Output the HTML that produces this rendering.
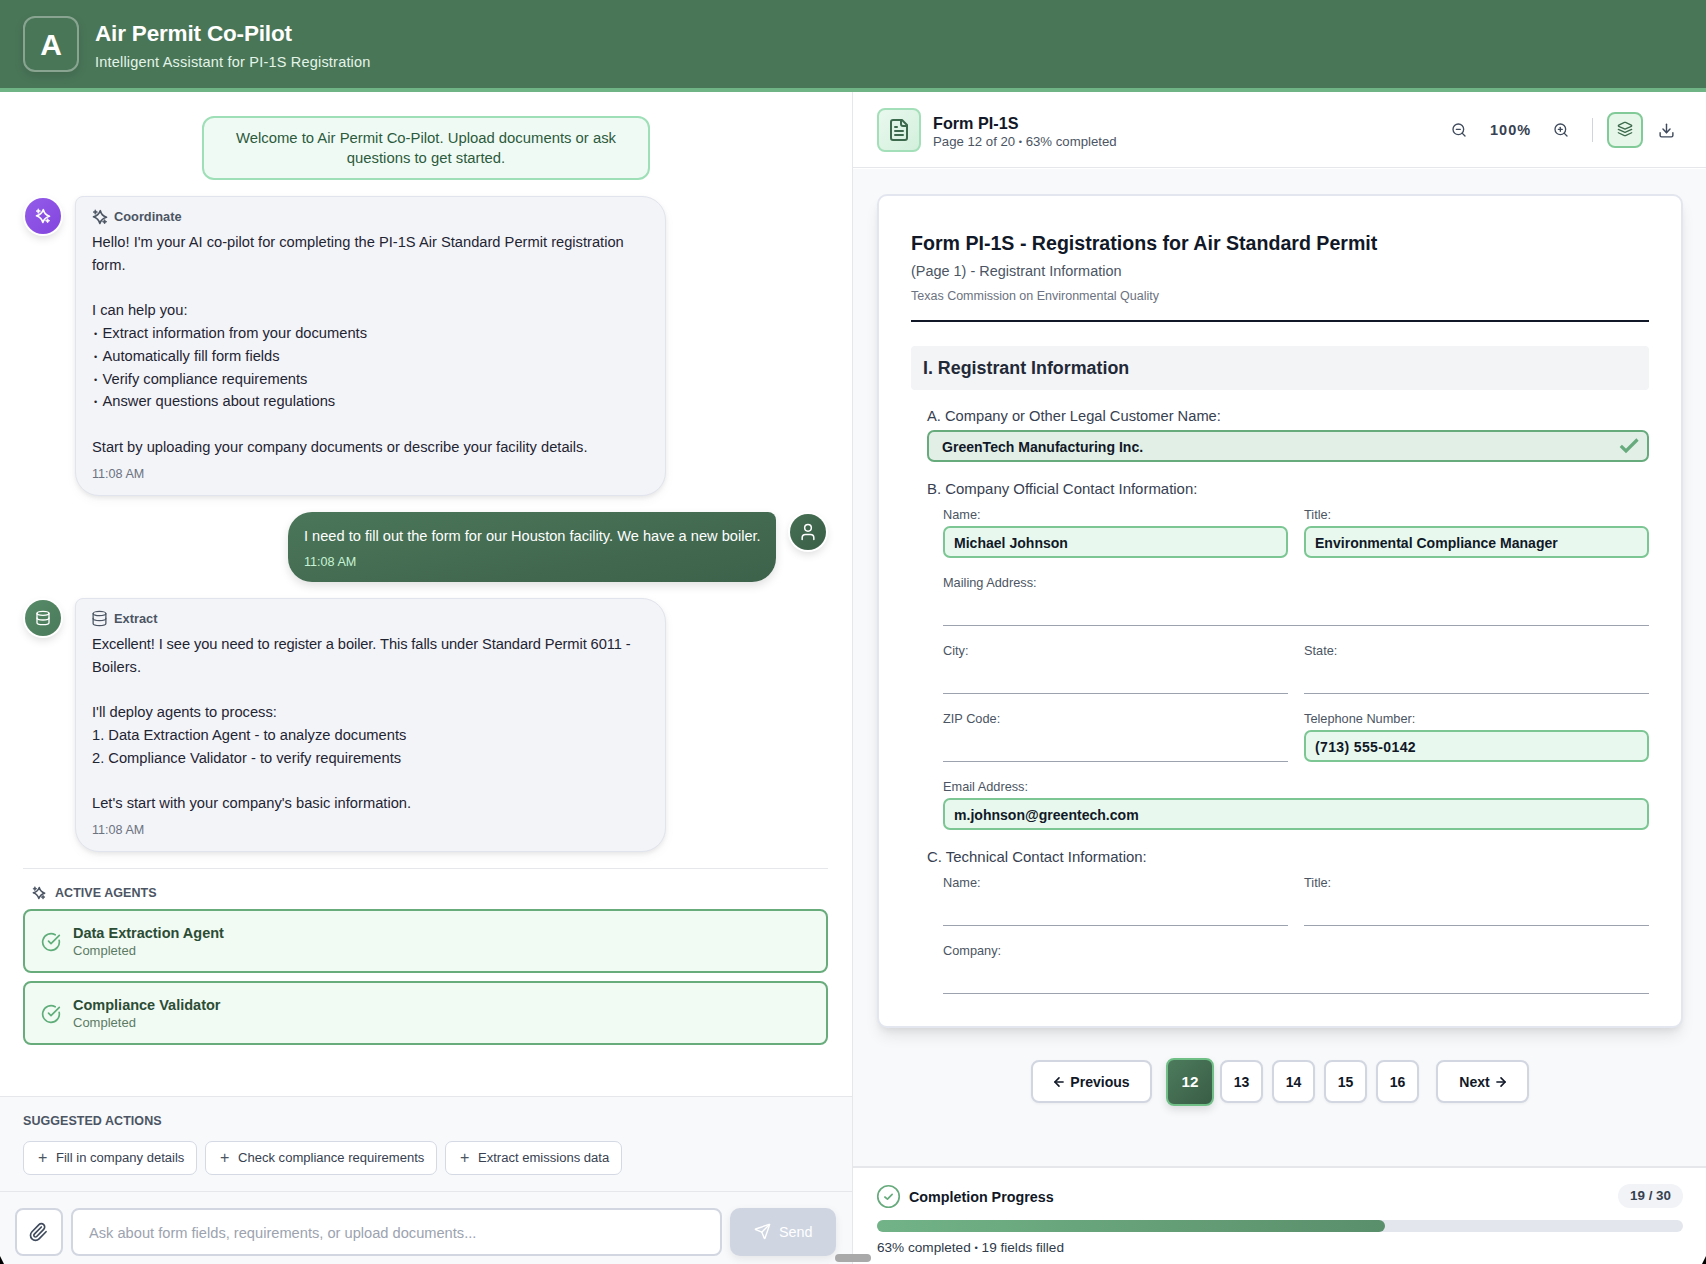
<!DOCTYPE html>
<html><head><meta charset="utf-8">
<style>
*{box-sizing:border-box;margin:0;padding:0}
html,body{width:1706px;height:1264px;overflow:hidden;background:#fff;font-family:"Liberation Sans",sans-serif;color:#111827}
.abs{position:absolute}
#hdr{left:0;top:0;width:1706px;height:88px;background:#4a7658}
#hdrbar{left:0;top:88px;width:1706px;height:4px;background:#6fb485}
#logo{left:23px;top:16px;width:56px;height:56px;border:2px solid rgba(255,255,255,0.35);border-radius:12px;box-shadow:0 4px 10px rgba(0,0,0,0.12);color:#fff;font-weight:bold;font-size:30px;text-align:center;line-height:53px}
#title{left:95px;top:20px;color:#fff;font-weight:bold;font-size:22.5px;line-height:28px;letter-spacing:-0.17px}
#subtitle{left:95px;top:53px;color:#e3f5e8;font-size:14.5px;line-height:18px;letter-spacing:0.2px}
#left{left:0;top:92px;width:852px;height:1172px;background:#fff}
#divider{left:852px;top:92px;width:1px;height:1172px;background:#e5e7eb}
#welcome{left:202px;top:116px;width:448px;height:64px;border:2px solid #9fdfb7;border-radius:12px;background:#f0faf4;color:#2c5a3c;font-size:14.85px;line-height:20px;text-align:center;padding-top:10px}
.av{width:36px;height:36px;border-radius:50%;box-shadow:0 0 0 2px #fff,0 4px 10px rgba(0,0,0,0.15)}
.bub{background:#f3f4f8;border:1px solid #e1e4ec;border-radius:8px 24px 24px 24px;box-shadow:0 2px 4px rgba(0,0,0,0.07),0 4px 12px rgba(0,0,0,0.04)}
.bh{font-size:12.8px;font-weight:bold;color:#4b5563;line-height:16px}
.bt{font-size:14.7px;line-height:22.75px;color:#1f2433;white-space:pre}
.dot{font-size:9px;display:inline-block;width:10.5px;line-height:0;position:relative;top:-1px;padding-left:2px}
.tm{font-size:12.6px;color:#6b7280;line-height:14px}

.lbl{font-size:12.5px;font-weight:bold;color:#4b5563;letter-spacing:0.05px;line-height:16px}
.agent{left:23px;width:805px;height:64px;border:2px solid #68ac7c;border-radius:8px;background:#f2faf4}
.an{left:48px;top:13px;font-size:14.5px;font-weight:bold;color:#2b4d34;line-height:18px}
.as{left:48px;top:32px;font-size:13px;color:#5b7a63;line-height:16px}
.sbtn{top:1141px;height:34px;border:1px solid #d4d9e3;border-radius:7px;background:#fff;font-size:13.05px;color:#374151;line-height:32px;padding-left:32px}
.pl{position:absolute;left:14px;top:0;font-size:16px;color:#4b5563}

.sec{left:927px;font-size:14.95px;color:#374151;line-height:17px}
.sm{font-size:12.75px;color:#4b5563;line-height:15px}
.fld{height:32px;border:2px solid #7cc694;border-radius:7px;background:#e8f8ee;font-size:14.05px;font-weight:bold;color:#111827;line-height:31px;padding-left:9px}
.f1{border-color:#67ab7d;background:#e2efe6;padding-left:13px}
.ul{height:1px;background:#9ca3af}
.pb{top:1060px;height:43px;border:2px solid #d1d6e0;border-radius:8px;background:#fff;color:#111827;font-size:14.05px;font-weight:bold;display:flex;align-items:center;justify-content:center;line-height:16px;padding-top:1px;box-shadow:0 1px 3px rgba(0,0,0,0.05)}
.dot2{font-size:0.7em;position:relative;top:-1px}
</style></head><body>
<div id="hdr" class="abs"></div>
<div id="hdrbar" class="abs"></div>
<div id="logo" class="abs">A</div>
<div id="title" class="abs">Air Permit Co-Pilot</div>
<div id="subtitle" class="abs">Intelligent Assistant for PI-1S Registration</div>

<div id="divider" class="abs"></div>

<div id="welcome" class="abs">Welcome to Air Permit Co-Pilot. Upload documents or ask<br>questions to get started.</div>

<!-- Coordinate message -->
<div class="abs av" style="left:25px;top:198px;background:linear-gradient(135deg,#935ce9,#8445df)"></div>
<svg class="abs" style="left:35px;top:208px" width="16" height="16" viewBox="-8 -8 16 16" fill="none" stroke="#fff" stroke-width="1.7" stroke-linejoin="round"><path d="M0.3 -6.3 Q1.5 -1.5 6.5 0.2 Q1.5 1.5 -0.2 6.4 Q-1.5 1.5 -6.5 -0.2 Q-1.5 -1.5 0.3 -6.3Z"/><path fill="#fff" stroke-width="0.6" d="M-4.7 -7.3 Q-4.3 -5.3 -2.4 -4.9 Q-4.3 -4.5 -4.7 -2.5 Q-5.1 -4.5 -7 -4.9 Q-5.1 -5.3 -4.7 -7.3Z"/><path fill="#fff" stroke-width="0.6" d="M4.6 2.4 Q5 4.3 6.9 4.7 Q5 5.1 4.6 7 Q4.2 5.1 2.3 4.7 Q4.2 4.3 4.6 2.4Z"/></svg>
<div class="abs bub" style="left:75px;top:196px;width:591px;height:300px"></div>
<svg class="abs" style="left:92px;top:209px" width="16" height="16" viewBox="-8 -8 16 16" fill="none" stroke="#4b5563" stroke-width="1.7" stroke-linejoin="round"><path d="M0.3 -6.3 Q1.5 -1.5 6.5 0.2 Q1.5 1.5 -0.2 6.4 Q-1.5 1.5 -6.5 -0.2 Q-1.5 -1.5 0.3 -6.3Z"/><path fill="#4b5563" stroke-width="0.6" d="M-4.7 -7.3 Q-4.3 -5.3 -2.4 -4.9 Q-4.3 -4.5 -4.7 -2.5 Q-5.1 -4.5 -7 -4.9 Q-5.1 -5.3 -4.7 -7.3Z"/><path fill="#4b5563" stroke-width="0.6" d="M4.6 2.4 Q5 4.3 6.9 4.7 Q5 5.1 4.6 7 Q4.2 5.1 2.3 4.7 Q4.2 4.3 4.6 2.4Z"/></svg>
<div class="abs bh" style="left:114px;top:209px">Coordinate</div>
<div class="abs bt" style="left:92px;top:231px">Hello! I'm your AI co-pilot for completing the PI-1S Air Standard Permit registration
form.

I can help you:
<span class="dot">•</span>Extract information from your documents
<span class="dot">•</span>Automatically fill form fields
<span class="dot">•</span>Verify compliance requirements
<span class="dot">•</span>Answer questions about regulations

Start by uploading your company documents or describe your facility details.</div>
<div class="abs tm" style="left:92px;top:467px">11:08 AM</div>

<!-- User message -->
<div class="abs" style="left:288px;top:512px;width:488px;height:70px;border-radius:24px 8px 24px 24px;background:linear-gradient(170deg,#4b7659,#3d624b);box-shadow:0 4px 10px rgba(0,0,0,0.12)"></div>
<div class="abs" style="left:304px;top:528px;color:#fff;font-size:14.62px;line-height:17px">I need to fill out the form for our Houston facility. We have a new boiler.</div>
<div class="abs" style="left:304px;top:555px;color:#c8f3d4;font-size:12.6px;line-height:14px">11:08 AM</div>
<div class="abs av" style="left:790px;top:514px;background:linear-gradient(135deg,#456f53,#3a5f48)"></div>
<svg class="abs" style="left:798px;top:522px" width="20" height="20" viewBox="0 0 24 24" fill="none" stroke="#fff" stroke-width="1.8" stroke-linecap="round" stroke-linejoin="round"><path d="M19 21v-2a4 4 0 0 0-4-4H9a4 4 0 0 0-4 4v2"/><circle cx="12" cy="7" r="4"/></svg>

<!-- Extract message -->
<div class="abs av" style="left:25px;top:600px;background:linear-gradient(135deg,#578b68,#4a7a5a)"></div>
<svg class="abs" style="left:35px;top:610px" width="16" height="16" viewBox="0 0 24 24" fill="none" stroke="#fff" stroke-width="2" stroke-linecap="round" stroke-linejoin="round"><ellipse cx="12" cy="5" rx="9" ry="3"/><path d="M3 5V19A9 3 0 0 0 21 19V5"/><path d="M3 12A9 3 0 0 0 21 12"/></svg>
<div class="abs bub" style="left:75px;top:598px;width:591px;height:254px"></div>
<svg class="abs" style="left:91px;top:610px" width="17" height="17" viewBox="0 0 24 24" fill="none" stroke="#4b5563" stroke-width="1.8" stroke-linecap="round" stroke-linejoin="round"><ellipse cx="12" cy="5" rx="9" ry="3"/><path d="M3 5V19A9 3 0 0 0 21 19V5"/><path d="M3 12A9 3 0 0 0 21 12"/></svg>
<div class="abs bh" style="left:114px;top:611px">Extract</div>
<div class="abs bt" style="left:92px;top:633px"><span style="letter-spacing:-0.1px">Excellent! I see you need to register a boiler. This falls under Standard Permit 6011 -</span>
Boilers.

I'll deploy agents to process:
1. Data Extraction Agent - to analyze documents
2. Compliance Validator - to verify requirements

Let's start with your company's basic information.</div>
<div class="abs tm" style="left:92px;top:823px">11:08 AM</div>

<div class="abs" style="left:23px;top:868px;width:805px;height:1px;background:#e5e7eb"></div>


<!-- Active agents -->
<svg class="abs" style="left:32px;top:886px" width="14" height="14" viewBox="-8 -8 16 16" fill="none" stroke="#4b5563" stroke-width="1.7" stroke-linejoin="round"><path d="M0.3 -6.3 Q1.5 -1.5 6.5 0.2 Q1.5 1.5 -0.2 6.4 Q-1.5 1.5 -6.5 -0.2 Q-1.5 -1.5 0.3 -6.3Z"/><path fill="#4b5563" stroke-width="0.6" d="M-4.7 -7.3 Q-4.3 -5.3 -2.4 -4.9 Q-4.3 -4.5 -4.7 -2.5 Q-5.1 -4.5 -7 -4.9 Q-5.1 -5.3 -4.7 -7.3Z"/><path fill="#4b5563" stroke-width="0.6" d="M4.6 2.4 Q5 4.3 6.9 4.7 Q5 5.1 4.6 7 Q4.2 5.1 2.3 4.7 Q4.2 4.3 4.6 2.4Z"/></svg>
<div class="abs lbl" style="left:55px;top:885px">ACTIVE AGENTS</div>

<div class="abs agent" style="top:909px">
  <svg class="abs" style="left:16px;top:21px" width="20" height="20" viewBox="0 0 24 24" fill="none" stroke="#5fae7a" stroke-width="2" stroke-linecap="round" stroke-linejoin="round"><path d="M21.801 10A10 10 0 1 1 17 3.335"/><path d="m9 11 3 3L22 4"/></svg>
  <div class="abs an">Data Extraction Agent</div>
  <div class="abs as">Completed</div>
</div>
<div class="abs agent" style="top:981px">
  <svg class="abs" style="left:16px;top:21px" width="20" height="20" viewBox="0 0 24 24" fill="none" stroke="#5fae7a" stroke-width="2" stroke-linecap="round" stroke-linejoin="round"><path d="M21.801 10A10 10 0 1 1 17 3.335"/><path d="m9 11 3 3L22 4"/></svg>
  <div class="abs an">Compliance Validator</div>
  <div class="abs as">Completed</div>
</div>

<!-- Suggested actions -->
<div class="abs" style="left:0;top:1096px;width:852px;height:96px;background:#f8f9fb;border-top:1px solid #e5e7eb;border-bottom:1px solid #e5e7eb"></div>
<div class="abs lbl" style="left:23px;top:1113px">SUGGESTED ACTIONS</div>
<div class="abs sbtn" style="left:23px;width:174px"><span class="pl">+</span>Fill in company details</div>
<div class="abs sbtn" style="left:205px;width:232px"><span class="pl">+</span>Check compliance requirements</div>
<div class="abs sbtn" style="left:445px;width:177px"><span class="pl">+</span>Extract emissions data</div>

<!-- Input area -->
<div class="abs" style="left:0;top:1192px;width:852px;height:72px;background:#f8f9fb"></div>
<div class="abs" style="left:15px;top:1208px;width:48px;height:48px;border:2px solid #d1d6e0;border-radius:8px;background:#fff"></div>
<svg class="abs" style="left:28px;top:1222px" width="20" height="20" viewBox="0 0 24 24" fill="none" stroke="#3f4a5c" stroke-width="2" stroke-linecap="round" stroke-linejoin="round"><path d="m16 6-8.414 8.586a2 2 0 0 0 2.829 2.829l8.414-8.586a4 4 0 1 0-5.657-5.657l-8.379 8.551a6 6 0 1 0 8.485 8.485l8.379-8.551"/></svg>
<div class="abs" style="left:71px;top:1208px;width:651px;height:48px;border:2px solid #d1d6e0;border-radius:8px;background:#fff"></div>
<div class="abs" style="left:89px;top:1225px;font-size:14.65px;color:#9ca3af">Ask about form fields, requirements, or upload documents...</div>
<div class="abs" style="left:730px;top:1208px;width:106px;height:48px;border-radius:10px;background:#cfd5e1;box-shadow:0 3px 8px rgba(0,0,0,0.08)"></div>
<svg class="abs" style="left:754px;top:1223px" width="17" height="17" viewBox="0 0 24 24" fill="none" stroke="#fff" stroke-width="2" stroke-linecap="round" stroke-linejoin="round"><path d="M14.536 21.686a.5.5 0 0 0 .937-.024l6.5-19a.496.496 0 0 0-.635-.635l-19 6.5a.5.5 0 0 0-.024.937l7.93 3.18a2 2 0 0 1 1.112 1.11z"/><path d="m21.854 2.147-10.94 10.939"/></svg>
<div class="abs" style="left:779px;top:1224px;font-size:14.4px;color:#fff">Send</div>

<!-- RIGHT PANEL -->
<div class="abs" style="left:853px;top:92px;width:853px;height:76px;background:#fff;border-bottom:1px solid #e5e7eb"></div>
<div class="abs" style="left:877px;top:108px;width:44px;height:44px;border:2px solid #a3dfb8;border-radius:8px;background:linear-gradient(135deg,#e9f8ee,#d3f0dc)"></div>
<svg class="abs" style="left:887px;top:118px" width="24" height="24" viewBox="0 0 24 24" fill="none" stroke="#3d6a4c" stroke-width="2" stroke-linecap="round" stroke-linejoin="round"><path d="M15 2H6a2 2 0 0 0-2 2v16a2 2 0 0 0 2 2h12a2 2 0 0 0 2-2V7Z"/><path d="M14 2v4a2 2 0 0 0 2 2h4"/><path d="M10 9H8"/><path d="M16 13H8"/><path d="M16 17H8"/></svg>
<div class="abs" style="left:933px;top:113px;font-size:16.2px;font-weight:bold;color:#111827;line-height:20px">Form PI-1S</div>
<div class="abs" style="left:933px;top:134px;font-size:13.2px;color:#4b5563;line-height:16px">Page 12 of 20 <span class="dot2">•</span> 63% completed</div>

<svg class="abs" style="left:1451px;top:122px" width="16" height="16" viewBox="0 0 24 24" fill="none" stroke="#3f4a5c" stroke-width="2" stroke-linecap="round" stroke-linejoin="round"><circle cx="11" cy="11" r="8"/><line x1="21" x2="16.65" y1="21" y2="16.65"/><line x1="8" x2="14" y1="11" y2="11"/></svg>
<div class="abs" style="left:1490px;top:122px;font-size:14.5px;font-weight:bold;color:#374151;line-height:16px;letter-spacing:1px">100%</div>
<svg class="abs" style="left:1553px;top:122px" width="16" height="16" viewBox="0 0 24 24" fill="none" stroke="#3f4a5c" stroke-width="2" stroke-linecap="round" stroke-linejoin="round"><circle cx="11" cy="11" r="8"/><line x1="21" x2="16.65" y1="21" y2="16.65"/><line x1="11" x2="11" y1="8" y2="14"/><line x1="8" x2="14" y1="11" y2="11"/></svg>
<div class="abs" style="left:1592px;top:118px;width:1px;height:24px;background:#d1d5db"></div>
<div class="abs" style="left:1607px;top:112px;width:36px;height:36px;border:2px solid #82cb98;border-radius:8px;background:#e6f7ea"></div>
<svg class="abs" style="left:1617px;top:121px" width="16" height="16" viewBox="0 0 24 24" fill="none" stroke="#3d6a4c" stroke-width="2" stroke-linecap="round" stroke-linejoin="round"><path d="m12.83 2.18a2 2 0 0 0-1.66 0L2.6 6.08a1 1 0 0 0 0 1.83l8.58 3.91a2 2 0 0 0 1.66 0l8.58-3.9a1 1 0 0 0 0-1.83Z"/><path d="m22 17.65-9.17 4.16a2 2 0 0 1-1.66 0L2 17.65"/><path d="m22 12.65-9.17 4.16a2 2 0 0 1-1.66 0L2 12.65"/></svg>
<svg class="abs" style="left:1658px;top:122px" width="17" height="17" viewBox="0 0 24 24" fill="none" stroke="#3f4a5c" stroke-width="2" stroke-linecap="round" stroke-linejoin="round"><path d="M21 15v4a2 2 0 0 1-2 2H5a2 2 0 0 1-2-2v-4"/><polyline points="7 10 12 15 17 10"/><line x1="12" x2="12" y1="15" y2="3"/></svg>

<div class="abs" style="left:853px;top:169px;width:853px;height:998px;background:#f8f9fb"></div>

<!-- Form card -->
<div class="abs" style="left:877px;top:194px;width:806px;height:834px;background:#fff;border:2px solid #e3e6ee;border-radius:10px;box-shadow:0 10px 15px -3px rgba(0,0,0,0.1),0 4px 6px -2px rgba(0,0,0,0.06)"></div>
<div class="abs" style="left:911px;top:231px;font-size:19.6px;font-weight:bold;color:#111827;line-height:24px">Form PI-1S - Registrations for Air Standard Permit</div>
<div class="abs" style="left:911px;top:263px;font-size:14.46px;color:#4b5563;line-height:17px">(Page 1) - Registrant Information</div>
<div class="abs" style="left:911px;top:289px;font-size:12.5px;color:#6b7280;line-height:15px">Texas Commission on Environmental Quality</div>
<div class="abs" style="left:911px;top:320px;width:738px;height:2px;background:#111827"></div>

<div class="abs" style="left:911px;top:346px;width:738px;height:44px;background:#f3f4f6;border-radius:4px"></div>
<div class="abs" style="left:923px;top:357px;font-size:17.85px;font-weight:bold;color:#1f2937;line-height:22px">I. Registrant Information</div>

<div class="abs sec" style="top:408px;font-size:14.7px">A. Company or Other Legal Customer Name:</div>
<div class="abs fld f1" style="left:927px;top:430px;width:722px">GreenTech Manufacturing Inc.</div>
<svg class="abs" style="left:1617px;top:435px" width="24" height="22" viewBox="0 0 24 22" fill="none" stroke="#67ab7d" stroke-width="3.2" stroke-linecap="butt" stroke-linejoin="miter"><path d="M3.8 10.8l5.2 5.2L20.5 4.5"/></svg>

<div class="abs sec" style="top:480px">B. Company Official Contact Information:</div>
<div class="abs sm" style="left:943px;top:507px">Name:</div>
<div class="abs sm" style="left:1304px;top:507px">Title:</div>
<div class="abs fld f2" style="left:943px;top:526px;width:345px">Michael Johnson</div>
<div class="abs fld f2" style="left:1304px;top:526px;width:345px">Environmental Compliance Manager</div>

<div class="abs sm" style="left:943px;top:575px">Mailing Address:</div>
<div class="abs ul" style="left:943px;top:625px;width:706px"></div>

<div class="abs sm" style="left:943px;top:643px">City:</div>
<div class="abs sm" style="left:1304px;top:643px">State:</div>
<div class="abs ul" style="left:943px;top:693px;width:345px"></div>
<div class="abs ul" style="left:1304px;top:693px;width:345px"></div>

<div class="abs sm" style="left:943px;top:711px">ZIP Code:</div>
<div class="abs sm" style="left:1304px;top:711px">Telephone Number:</div>
<div class="abs ul" style="left:943px;top:761px;width:345px"></div>
<div class="abs fld f2" style="left:1304px;top:730px;width:345px;letter-spacing:0.35px">(713) 555-0142</div>

<div class="abs sm" style="left:943px;top:779px">Email Address:</div>
<div class="abs fld f2" style="left:943px;top:798px;width:706px">m.johnson@greentech.com</div>

<div class="abs sec" style="top:848px">C. Technical Contact Information:</div>
<div class="abs sm" style="left:943px;top:875px">Name:</div>
<div class="abs sm" style="left:1304px;top:875px">Title:</div>
<div class="abs ul" style="left:943px;top:925px;width:345px"></div>
<div class="abs ul" style="left:1304px;top:925px;width:345px"></div>
<div class="abs sm" style="left:943px;top:943px">Company:</div>
<div class="abs ul" style="left:943px;top:993px;width:706px"></div>

<!-- Pagination -->
<div class="abs pb" style="left:1031px;width:121px;padding-right:1px"><svg width="14" height="14" viewBox="0 0 24 24" fill="none" stroke="#111827" stroke-width="2.8" stroke-linecap="round" stroke-linejoin="round" style="margin-right:4px"><path d="m12 19-7-7 7-7"/><path d="M19 12H5"/></svg>Previous</div>
<div class="abs" style="left:1166px;top:1058px;width:48px;height:48px;border:2px solid #6fbf87;border-radius:8px;background:linear-gradient(135deg,#4d7b5c,#395d46);color:#fff;font-size:15.2px;font-weight:bold;text-align:center;line-height:44px;box-shadow:0 4px 8px rgba(0,0,0,0.12)">12</div>
<div class="abs pb" style="left:1220px;width:43px">13</div>
<div class="abs pb" style="left:1272px;width:43px">14</div>
<div class="abs pb" style="left:1324px;width:43px">15</div>
<div class="abs pb" style="left:1376px;width:43px">16</div>
<div class="abs pb" style="left:1436px;width:93px;padding-left:2px">Next<svg width="14" height="14" viewBox="0 0 24 24" fill="none" stroke="#111827" stroke-width="2.8" stroke-linecap="round" stroke-linejoin="round" style="margin-left:4px"><path d="M5 12h14"/><path d="m12 5 7 7-7 7"/></svg></div>

<!-- Progress -->
<div class="abs" style="left:853px;top:1166px;width:853px;height:98px;background:#fff;border-top:2px solid #e5e7eb"></div>
<svg class="abs" style="left:876px;top:1184px" width="25" height="25" viewBox="0 0 24 24" fill="none" stroke="#67ab7d" stroke-width="1.6" stroke-linecap="round" stroke-linejoin="round"><circle cx="12" cy="12" r="10.3"/><path d="m8.5 12.5 2.5 2 4.5-4.5"/></svg>
<div class="abs" style="left:909px;top:1188px;font-size:14.3px;font-weight:bold;color:#111827;line-height:18px">Completion Progress</div>
<div class="abs" style="left:1618px;top:1184px;width:65px;height:24px;border-radius:12px;background:#f1f3f6;color:#374151;font-size:13.4px;font-weight:bold;text-align:center;line-height:24px">19 / 30</div>
<div class="abs" style="left:877px;top:1220px;width:806px;height:12px;border-radius:6px;background:#e3e6ec"></div>
<div class="abs" style="left:877px;top:1220px;width:508px;height:12px;border-radius:6px;background:linear-gradient(90deg,#72b387,#5a8f6b)"></div>
<div class="abs" style="left:877px;top:1240px;font-size:13.6px;color:#2f3a4a;line-height:15px">63% completed <span class="dot2">•</span> 19 fields filled</div>
<div class="abs" style="left:835px;top:1254px;width:36px;height:8px;border-radius:4px;background:#a9a9a9"></div>
<svg class="abs" style="left:0;top:1256px" width="4" height="8"><path d="M0 0 L4 8 L0 8Z" fill="#000"/></svg>
<svg class="abs" style="left:1702px;top:1256px" width="4" height="8"><path d="M4 0 L4 8 L0 8Z" fill="#000"/></svg>
</body></html>
